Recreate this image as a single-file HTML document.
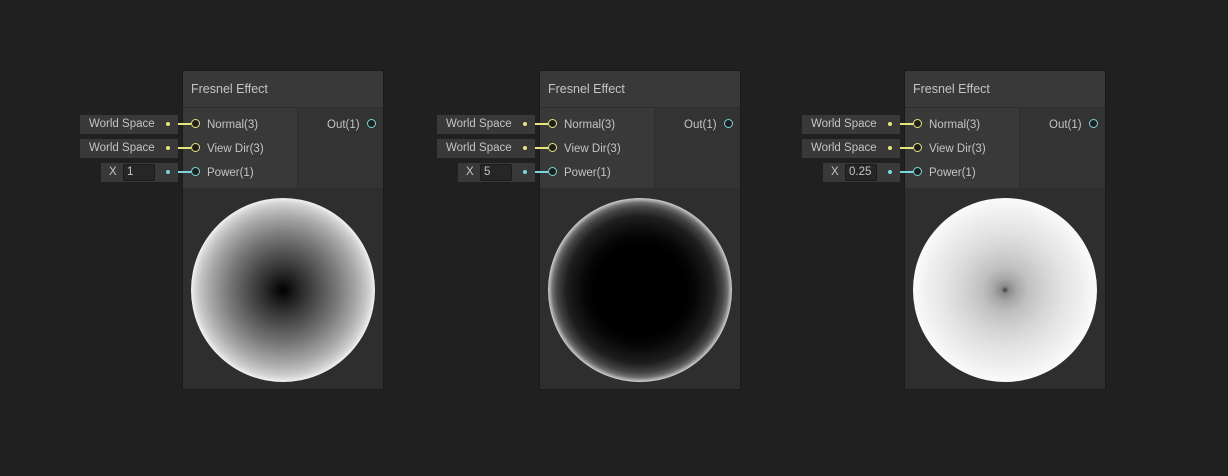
<!DOCTYPE html>
<html><head><style>
body{margin:0;width:1228px;height:476px;background:#202020;font-family:"Liberation Sans",sans-serif;position:relative;overflow:hidden}
.n{position:absolute;top:71px;width:200px;height:318px;background:#2e2e2e;box-shadow:0 0 0 1px #1a1a1a}
.h{position:absolute;left:0;top:0;width:200px;height:36px;background:#393939;color:#c4c4c4;font-size:12.5px;line-height:36px;text-indent:8px}
.l{position:absolute;left:0;top:37px;width:114px;height:80px;background:#393939}
.r{position:absolute;left:115px;top:37px;width:85px;height:80px;background:#333}
.t{position:absolute;color:#c4c4c4;font-size:11.5px}
.pv{position:absolute;left:0;top:118px;width:200px;height:200px;background:#2e2e2e}
.s{position:absolute;left:8px;top:9px;width:184px;height:184px;border-radius:50%}
.pc{position:absolute;width:7px;height:7px;border-radius:50%;border:1.3px solid;background:#1e1e1e}
.ib{position:absolute;height:19px;background:#393939;color:#c4c4c4;font-size:11.5px;line-height:19px}
.dot{position:absolute;width:4px;height:4px;border-radius:50%}
.ln{position:absolute;height:2px}
.fld{position:absolute;top:1px;height:15px;background:#262626;border:1px solid #1c1c1c;border-radius:2px;text-indent:3px;line-height:15px}
</style></head><body>
<div id="root"></div>
<script>
const grads=[
"radial-gradient(circle closest-side,#000 0%,#2b2b2b 20%,#525252 40%,#7a7a7a 60%,#a8a8a8 80%,#c4c4c4 90%,#d6d6d6 95%,#f2f2f2 100%)",
"radial-gradient(circle closest-side,#000 0%,#000 50%,#060606 60%,#1e1e1e 80%,#454545 90%,#6e6e6e 95%,#d0d0d0 100%)",
"radial-gradient(circle closest-side,#3a3a3a 0%,#8a8a8a 4%,#a6a6a6 12%,#c0c0c0 25%,#d4d4d4 45%,#e4e4e4 65%,#eeeeee 82%,#f5f5f5 92%,#fafafa 100%)"];
const xs=[183,540,905],vals=["1","5","0.25"];
let h="";
xs.forEach((x,i)=>{
 h+=`<div class="n" style="left:${x}px"><div class="h">Fresnel Effect</div><div class="l"></div><div class="r"></div>
 <div class="t" style="left:24px;top:48px">Normal(3)</div><div class="t" style="left:24px;top:72px">View Dir(3)</div><div class="t" style="left:24px;top:96px">Power(1)</div>
 <div class="t" style="left:144px;top:48px">Out(1)</div>
 <div class="pc" style="left:8px;top:48px;border-color:#e6e67a"></div><div class="pc" style="left:8px;top:72px;border-color:#e6e67a"></div><div class="pc" style="left:8px;top:96px;border-color:#7ad6dc"></div>
 <div class="pc" style="left:184px;top:48px;border-color:#7ad6dc"></div>
 <div class="pv"><div class="s" style="background:${grads[i]}"></div></div></div>`;
 const rows=[[115,"World Space",103,"#e6e67a"],[139,"World Space",103,"#e6e67a"],[163,"X",82,"#7ad6dc"]];
 rows.forEach((r,j)=>{
  const left=x-r[2];
  let inner=j<2?`<span style="position:absolute;left:9px">${r[1]}</span>`:`<span style="position:absolute;left:8px">X</span><div class="fld" style="left:22px;width:30px">${vals[i]}</div>`;
  h+=`<div class="ib" style="left:${left}px;top:${r[0]}px;width:${r[2]-5}px">${inner}</div>`;
  h+=`<div class="dot" style="left:${x-17}px;top:${r[0]+7}px;background:${r[3]}"></div>`;
  h+=`<div class="ln" style="left:${x-5}px;top:${r[0]+8}px;width:13px;background:${r[3]}"></div>`;
 });
});
document.getElementById("root").innerHTML=h;
</script>
</body></html>
